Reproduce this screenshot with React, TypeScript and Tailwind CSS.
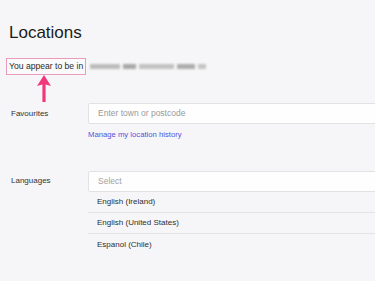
import React from "react";

const languages = ["English (Ireland)", "English (United States)", "Espanol (Chile)"];

// pixelated location text, drawn as grey blocks
const blurBlocks = [
  { w: 30, c: "bg-[#bcbcbc]" },
  { w: 13, c: "bg-[#a8a8a8]" },
  { w: 35, c: "bg-[#c2c2c2]" },
  { w: 18, c: "bg-[#acacac]" },
  { w: 8, c: "bg-[#c4c4c4]" },
];

const Arrow = () => (
  <svg
    className="absolute left-[37px] top-[75px]"
    width="14"
    height="27"
    viewBox="0 0 14 27"
  >
    <path d="M7 0 L14 11 L8.6 9.5 L8.6 27 L5.4 27 L5.4 9.5 L0 11 Z" fill="#f0377a" />
  </svg>
);

export default function App() {
  return (
    <div className="relative w-[375px] h-[281px] overflow-hidden bg-[#f6f6f8] font-['Liberation_Sans',Arial,sans-serif]">
      <h1 className="pt-[23px] pl-[9px] text-[17px] leading-[20px] text-[#1b1b1b] font-normal">
        Locations
      </h1>

      <div className="mt-[15px] ml-[6px] flex items-center h-[17px]">
        <div className="h-[17px] px-[2px] flex items-center border border-[#ea9bbb] bg-[#fafafa] text-[8.6px] text-[#2a2a2a] whitespace-nowrap">
          You appear to be in
        </div>
        <div className="ml-[4px] flex items-center gap-[3px] blur-[0.8px]">
          {blurBlocks.map((b, i) => (
            <div key={i} className={`h-[5px] ${b.c}`} style={{ width: b.w }} />
          ))}
        </div>
      </div>

      <div className="mt-[28px] flex">
        <div className="w-[88px] shrink-0 pl-[11px] pt-[6px] text-[8px] leading-[10px] text-[#333]">
          Favourites
        </div>
        <div className="flex-1 min-w-0">
          <div className="h-[21px] w-[300px] flex items-center pl-[9px] bg-[#fefefe] border border-[#e2e2e4] rounded-l-[2px] text-[8.5px] text-[#9a9a9a]">
            Enter town or postcode
          </div>
          <div className="mt-[6px] text-[7.7px] leading-[10px] text-[#5252e0]">
            Manage my location history
          </div>
        </div>
      </div>

      <div className="mt-[31px] flex">
        <div className="w-[88px] shrink-0 pl-[11px] pt-[5px] text-[8px] leading-[10px] text-[#333]">
          Languages
        </div>
        <div className="flex-1 min-w-0">
          <div className="h-[21px] w-[300px] flex items-center pl-[9px] bg-[#fefefe] border border-[#e2e2e4] rounded-l-[2px] text-[8.5px] text-[#a3a3a3]">
            Select
          </div>
          {languages.map((l, i) => (
            <div
              key={l}
              className={`h-[21px] w-[300px] flex items-center pl-[9px] text-[8px] text-[#2e2e2e] ${
                i < languages.length - 1 ? "border-b border-[#e4e4e6]" : ""
              }`}
            >
              {l}
            </div>
          ))}
        </div>
      </div>

      <Arrow />
    </div>
  );
}
